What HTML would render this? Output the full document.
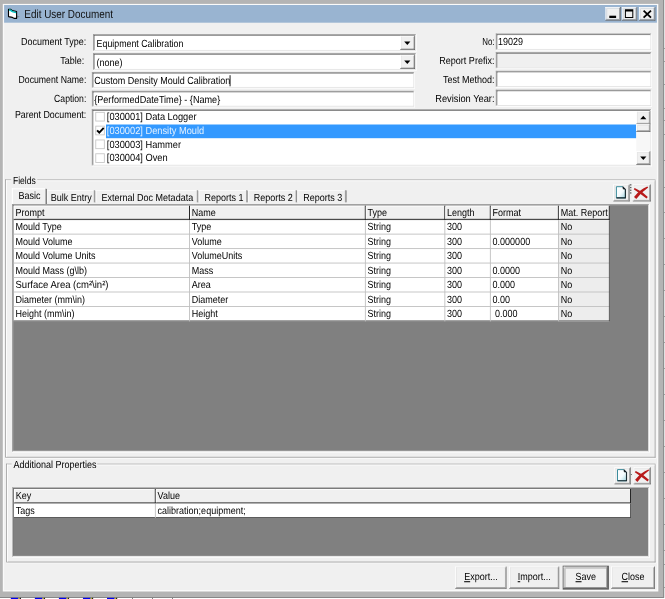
<!DOCTYPE html>
<html><head><meta charset="utf-8"><title>Edit User Document</title>
<style>
*{margin:0;padding:0}
html,body{width:665px;height:599px;overflow:hidden;background:#fff}
svg{will-change:transform;display:block;position:absolute;left:0;top:0}
text{font-family:"Liberation Sans",sans-serif;white-space:pre;text-rendering:geometricPrecision}
</style></head><body>
<svg width="665" height="599" viewBox="0 0 665 599">
<defs><linearGradient id="dg" x1="0" y1="0" x2="1" y2="1"><stop offset="0" stop-color="#fff"/><stop offset=".55" stop-color="#f4fbfd"/><stop offset="1" stop-color="#9fd3de"/></linearGradient></defs>
<rect x="0" y="0" width="665" height="599" fill="#fff"/>
<rect x="0" y="0" width="664.2" height="597.8" fill="#6a6a6a"/>
<rect x="0" y="0" width="663.5" height="597" fill="#b4b4b4"/>
<rect x="2.8" y="3.9" width="655.5" height="587.6" fill="#fafafa"/>
<rect x="4.1" y="5" width="652.8" height="585" fill="#f0f0f0"/>
<rect x="4.1" y="5" width="652.8" height="17.7" fill="#99b4d1"/>
<rect x="10.8" y="597.8" width="7.7" height="1.2" fill="#0000f0"/>
<rect x="18.5" y="597.8" width="1.2" height="1.2" fill="#c8c800"/>
<rect x="19.7" y="597.8" width="1.3" height="1.2" fill="#202020"/>
<rect x="34.85" y="597.8" width="7.7" height="1.2" fill="#0000f0"/>
<rect x="42.55" y="597.8" width="1.2" height="1.2" fill="#c8c800"/>
<rect x="43.75" y="597.8" width="1.3" height="1.2" fill="#202020"/>
<rect x="58.9" y="597.8" width="7.7" height="1.2" fill="#0000f0"/>
<rect x="66.6" y="597.8" width="1.2" height="1.2" fill="#c8c800"/>
<rect x="67.8" y="597.8" width="1.3" height="1.2" fill="#202020"/>
<rect x="82.95" y="597.8" width="7.7" height="1.2" fill="#0000f0"/>
<rect x="90.65" y="597.8" width="1.2" height="1.2" fill="#c8c800"/>
<rect x="91.85" y="597.8" width="1.3" height="1.2" fill="#202020"/>
<rect x="107" y="597.8" width="7.7" height="1.2" fill="#0000f0"/>
<rect x="114.7" y="597.8" width="1.2" height="1.2" fill="#c8c800"/>
<rect x="115.9" y="597.8" width="1.3" height="1.2" fill="#202020"/>
<rect x="132" y="597.8" width="1" height="1.2" fill="#808080"/>
<rect x="152" y="597.8" width="1" height="1.2" fill="#808080"/>
<rect x="172" y="597.8" width="1" height="1.2" fill="#808080"/>
<rect x="664.2" y="48" width="0.8" height="1" fill="#909090"/>
<rect x="664.2" y="61" width="0.8" height="1" fill="#909090"/>
<rect x="664.2" y="84" width="0.8" height="1" fill="#909090"/>
<rect x="664.2" y="108" width="0.8" height="1" fill="#909090"/>
<rect x="664.2" y="120" width="0.8" height="1" fill="#909090"/>
<rect x="664.2" y="134" width="0.8" height="1" fill="#909090"/>
<rect x="664.2" y="160" width="0.8" height="1" fill="#909090"/>
<rect x="664.2" y="187" width="0.8" height="1" fill="#909090"/>
<rect x="664.2" y="212" width="0.8" height="1" fill="#909090"/>
<rect x="664.2" y="238" width="0.8" height="1" fill="#909090"/>
<rect x="664.2" y="264" width="0.8" height="1" fill="#909090"/>
<rect x="664.2" y="290" width="0.8" height="1" fill="#909090"/>
<rect x="664.2" y="316" width="0.8" height="1" fill="#909090"/>
<rect x="664.2" y="342" width="0.8" height="1" fill="#909090"/>
<rect x="664.2" y="368" width="0.8" height="1" fill="#909090"/>
<rect x="664.2" y="394" width="0.8" height="1" fill="#909090"/>
<rect x="664.2" y="420" width="0.8" height="1" fill="#909090"/>
<rect x="664.2" y="446" width="0.8" height="1" fill="#909090"/>
<rect x="664.2" y="472" width="0.8" height="1" fill="#909090"/>
<rect x="664.2" y="498" width="0.8" height="1" fill="#909090"/>
<rect x="664.2" y="524" width="0.8" height="1" fill="#909090"/>
<rect x="664.2" y="550" width="0.8" height="1" fill="#909090"/>
<rect x="664.2" y="564" width="0.8" height="1" fill="#909090"/>
<rect x="664.2" y="587" width="0.8" height="1" fill="#909090"/>
<polygon points="17,15.6 19.8,16.7 17,17.8" fill="#7f8c9a"/>
<polygon points="8.5,9.3 10.6,9.3 12.4,10.6 16.6,11.5 16.6,18.4 14.4,18.4 12.4,17.4 8.5,16.6" fill="#fff" stroke="#000" stroke-width="1.1" stroke-linejoin="round"/>
<polyline points="9.1,10.1 10.6,10.3 12.4,11.6 16.1,12.6" fill="none" stroke="#00c4c4" stroke-width="1.5"/>
<text transform="translate(24.3 18.1) scale(0.86 1)" font-size="11.7" text-anchor="start" fill="#101010" textLength="103.14" lengthAdjust="spacingAndGlyphs">Edit User Document</text>
<rect x="605.4" y="19.75" width="15.3" height="0.85" fill="#696969"/>
<rect x="619.85" y="7" width="0.85" height="13.6" fill="#696969"/>
<rect x="605.4" y="7" width="14.45" height="0.85" fill="#ffffff"/>
<rect x="605.4" y="7" width="0.85" height="12.75" fill="#ffffff"/>
<rect x="606.25" y="18.9" width="13.6" height="0.85" fill="#a0a0a0"/>
<rect x="619" y="7.85" width="0.85" height="11.9" fill="#a0a0a0"/>
<rect x="606.25" y="7.85" width="12.75" height="0.85" fill="#e6e6e6"/>
<rect x="606.25" y="7.85" width="0.85" height="11.05" fill="#e6e6e6"/>
<rect x="607.1" y="8.7" width="11.9" height="10.2" fill="#f0f0f0"/>
<rect x="621.9" y="19.75" width="15.3" height="0.85" fill="#696969"/>
<rect x="636.35" y="7" width="0.85" height="13.6" fill="#696969"/>
<rect x="621.9" y="7" width="14.45" height="0.85" fill="#ffffff"/>
<rect x="621.9" y="7" width="0.85" height="12.75" fill="#ffffff"/>
<rect x="622.75" y="18.9" width="13.6" height="0.85" fill="#a0a0a0"/>
<rect x="635.5" y="7.85" width="0.85" height="11.9" fill="#a0a0a0"/>
<rect x="622.75" y="7.85" width="12.75" height="0.85" fill="#e6e6e6"/>
<rect x="622.75" y="7.85" width="0.85" height="11.05" fill="#e6e6e6"/>
<rect x="623.6" y="8.7" width="11.9" height="10.2" fill="#f0f0f0"/>
<rect x="639.1" y="19.75" width="16.2" height="0.85" fill="#696969"/>
<rect x="654.45" y="7" width="0.85" height="13.6" fill="#696969"/>
<rect x="639.1" y="7" width="15.35" height="0.85" fill="#ffffff"/>
<rect x="639.1" y="7" width="0.85" height="12.75" fill="#ffffff"/>
<rect x="639.95" y="18.9" width="14.5" height="0.85" fill="#a0a0a0"/>
<rect x="653.6" y="7.85" width="0.85" height="11.9" fill="#a0a0a0"/>
<rect x="639.95" y="7.85" width="13.65" height="0.85" fill="#e6e6e6"/>
<rect x="639.95" y="7.85" width="0.85" height="11.05" fill="#e6e6e6"/>
<rect x="640.8" y="8.7" width="12.8" height="10.2" fill="#f0f0f0"/>
<rect x="609.3" y="15.7" width="6.8" height="2.3" fill="#000"/>
<path d="M624.9 9.3 H633.3 V17.9 H624.9 Z M625.9 11.4 V16.9 H632.3 V11.4 Z" fill="#000" fill-rule="evenodd"/>
<path d="M643.6 10.6 L651 17.6 M651 10.6 L643.6 17.6" stroke="#000" stroke-width="1.8" fill="none"/>
<text transform="translate(86.3 44.8) scale(0.874 1)" font-size="10.3" text-anchor="end" fill="#000" textLength="74.6" lengthAdjust="spacingAndGlyphs">Document Type:</text>
<text transform="translate(84.3 64) scale(0.874 1)" font-size="10.3" text-anchor="end" fill="#000">Table:</text>
<text transform="translate(86.3 83.1) scale(0.874 1)" font-size="10.3" text-anchor="end" fill="#000" textLength="77.57" lengthAdjust="spacingAndGlyphs">Document Name:</text>
<text transform="translate(86.3 101.9) scale(0.874 1)" font-size="10.3" text-anchor="end" fill="#000" textLength="36.84" lengthAdjust="spacingAndGlyphs">Caption:</text>
<text transform="translate(86.3 117.9) scale(0.874 1)" font-size="10.3" text-anchor="end" fill="#000" textLength="81.69" lengthAdjust="spacingAndGlyphs">Parent Document:</text>
<rect x="93" y="50.75" width="323.6" height="0.85" fill="#ffffff"/>
<rect x="415.75" y="34.1" width="0.85" height="17.5" fill="#ffffff"/>
<rect x="93" y="34.1" width="322.75" height="0.85" fill="#a0a0a0"/>
<rect x="93" y="34.1" width="0.85" height="16.65" fill="#a0a0a0"/>
<rect x="93.85" y="49.9" width="321.9" height="0.85" fill="#e3e3e3"/>
<rect x="414.9" y="34.95" width="0.85" height="15.8" fill="#e3e3e3"/>
<rect x="93.85" y="34.95" width="321.05" height="0.85" fill="#696969"/>
<rect x="93.85" y="34.95" width="0.85" height="14.95" fill="#696969"/>
<rect x="94.7" y="35.8" width="320.2" height="14.1" fill="#fff"/>
<rect x="400.2" y="49.15" width="14.8" height="0.85" fill="#696969"/>
<rect x="414.15" y="35.9" width="0.85" height="14.1" fill="#696969"/>
<rect x="400.2" y="35.9" width="13.95" height="0.85" fill="#ffffff"/>
<rect x="400.2" y="35.9" width="0.85" height="13.25" fill="#ffffff"/>
<rect x="401.05" y="48.3" width="13.1" height="0.85" fill="#a0a0a0"/>
<rect x="413.3" y="36.75" width="0.85" height="12.4" fill="#a0a0a0"/>
<rect x="401.05" y="36.75" width="12.25" height="0.85" fill="#e6e6e6"/>
<rect x="401.05" y="36.75" width="0.85" height="11.55" fill="#e6e6e6"/>
<rect x="401.9" y="37.6" width="11.4" height="10.7" fill="#f0f0f0"/>
<polygon points="404.2,41.6 410.4,41.6 407.3,45.1" fill="#000"/>
<text transform="translate(96.6 46.6) scale(0.874 1)" font-size="10.3" text-anchor="start" fill="#000" textLength="99.31" lengthAdjust="spacingAndGlyphs">Equipment Calibration</text>
<rect x="93" y="69.75" width="323.6" height="0.85" fill="#ffffff"/>
<rect x="415.75" y="53.1" width="0.85" height="17.5" fill="#ffffff"/>
<rect x="93" y="53.1" width="322.75" height="0.85" fill="#a0a0a0"/>
<rect x="93" y="53.1" width="0.85" height="16.65" fill="#a0a0a0"/>
<rect x="93.85" y="68.9" width="321.9" height="0.85" fill="#e3e3e3"/>
<rect x="414.9" y="53.95" width="0.85" height="15.8" fill="#e3e3e3"/>
<rect x="93.85" y="53.95" width="321.05" height="0.85" fill="#696969"/>
<rect x="93.85" y="53.95" width="0.85" height="14.95" fill="#696969"/>
<rect x="94.7" y="54.8" width="320.2" height="14.1" fill="#fff"/>
<rect x="400.2" y="68.15" width="14.8" height="0.85" fill="#696969"/>
<rect x="414.15" y="54.9" width="0.85" height="14.1" fill="#696969"/>
<rect x="400.2" y="54.9" width="13.95" height="0.85" fill="#ffffff"/>
<rect x="400.2" y="54.9" width="0.85" height="13.25" fill="#ffffff"/>
<rect x="401.05" y="67.3" width="13.1" height="0.85" fill="#a0a0a0"/>
<rect x="413.3" y="55.75" width="0.85" height="12.4" fill="#a0a0a0"/>
<rect x="401.05" y="55.75" width="12.25" height="0.85" fill="#e6e6e6"/>
<rect x="401.05" y="55.75" width="0.85" height="11.55" fill="#e6e6e6"/>
<rect x="401.9" y="56.6" width="11.4" height="10.7" fill="#f0f0f0"/>
<polygon points="404.2,60.6 410.4,60.6 407.3,64.1" fill="#000"/>
<text transform="translate(96.6 65.6) scale(0.874 1)" font-size="10.3" text-anchor="start" fill="#000">(none)</text>
<rect x="91.9" y="87.75" width="323.1" height="0.85" fill="#ffffff"/>
<rect x="414.15" y="72" width="0.85" height="16.6" fill="#ffffff"/>
<rect x="91.9" y="72" width="322.25" height="0.85" fill="#a0a0a0"/>
<rect x="91.9" y="72" width="0.85" height="15.75" fill="#a0a0a0"/>
<rect x="92.75" y="86.9" width="321.4" height="0.85" fill="#e3e3e3"/>
<rect x="413.3" y="72.85" width="0.85" height="14.9" fill="#e3e3e3"/>
<rect x="92.75" y="72.85" width="320.55" height="0.85" fill="#696969"/>
<rect x="92.75" y="72.85" width="0.85" height="14.05" fill="#696969"/>
<rect x="93.6" y="73.7" width="319.7" height="13.2" fill="#fff"/>
<text transform="translate(94.2 83.8) scale(0.874 1)" font-size="10.3" text-anchor="start" fill="#000">Custom Density Mould Calibration</text>
<rect x="229.6" y="75.2" width="0.9" height="11.1" fill="#000"/>
<rect x="91.9" y="106.55" width="323.1" height="0.85" fill="#ffffff"/>
<rect x="414.15" y="90.8" width="0.85" height="16.6" fill="#ffffff"/>
<rect x="91.9" y="90.8" width="322.25" height="0.85" fill="#a0a0a0"/>
<rect x="91.9" y="90.8" width="0.85" height="15.75" fill="#a0a0a0"/>
<rect x="92.75" y="105.7" width="321.4" height="0.85" fill="#e3e3e3"/>
<rect x="413.3" y="91.65" width="0.85" height="14.9" fill="#e3e3e3"/>
<rect x="92.75" y="91.65" width="320.55" height="0.85" fill="#696969"/>
<rect x="92.75" y="91.65" width="0.85" height="14.05" fill="#696969"/>
<rect x="93.6" y="92.5" width="319.7" height="13.2" fill="#fff"/>
<text transform="translate(94.2 102.7) scale(0.874 1)" font-size="10.3" text-anchor="start" fill="#000" textLength="144.16" lengthAdjust="spacingAndGlyphs">{PerformedDateTime} - {Name}</text>
<text transform="translate(494.5 44.8) scale(0.874 1)" font-size="10.3" text-anchor="end" fill="#000" textLength="14.07" lengthAdjust="spacingAndGlyphs">No:</text>
<text transform="translate(494.5 63.9) scale(0.874 1)" font-size="10.3" text-anchor="end" fill="#000" textLength="63.27" lengthAdjust="spacingAndGlyphs">Report Prefix:</text>
<text transform="translate(494.5 82.8) scale(0.874 1)" font-size="10.3" text-anchor="end" fill="#000">Test Method:</text>
<text transform="translate(494.5 101.6) scale(0.874 1)" font-size="10.3" text-anchor="end" fill="#000" textLength="67.85" lengthAdjust="spacingAndGlyphs">Revision Year:</text>
<rect x="495.8" y="49.75" width="156.2" height="0.85" fill="#ffffff"/>
<rect x="651.15" y="33.5" width="0.85" height="17.1" fill="#ffffff"/>
<rect x="495.8" y="33.5" width="155.35" height="0.85" fill="#a0a0a0"/>
<rect x="495.8" y="33.5" width="0.85" height="16.25" fill="#a0a0a0"/>
<rect x="496.65" y="48.9" width="154.5" height="0.85" fill="#e3e3e3"/>
<rect x="650.3" y="34.35" width="0.85" height="15.4" fill="#e3e3e3"/>
<rect x="496.65" y="34.35" width="153.65" height="0.85" fill="#696969"/>
<rect x="496.65" y="34.35" width="0.85" height="14.55" fill="#696969"/>
<rect x="497.5" y="35.2" width="152.8" height="13.7" fill="#fff"/>
<text transform="translate(498 45.4) scale(0.874 1)" font-size="10.3" text-anchor="start" fill="#000">19029</text>
<rect x="495.8" y="68.25" width="156.2" height="0.85" fill="#ffffff"/>
<rect x="651.15" y="52.1" width="0.85" height="17" fill="#ffffff"/>
<rect x="495.8" y="52.1" width="155.35" height="0.85" fill="#a0a0a0"/>
<rect x="495.8" y="52.1" width="0.85" height="16.15" fill="#a0a0a0"/>
<rect x="496.65" y="67.4" width="154.5" height="0.85" fill="#e3e3e3"/>
<rect x="650.3" y="52.95" width="0.85" height="15.3" fill="#e3e3e3"/>
<rect x="496.65" y="52.95" width="153.65" height="0.85" fill="#696969"/>
<rect x="496.65" y="52.95" width="0.85" height="14.45" fill="#696969"/>
<rect x="497.5" y="53.8" width="152.8" height="13.6" fill="#f0f0f0"/>
<rect x="495.8" y="86.95" width="156.2" height="0.85" fill="#ffffff"/>
<rect x="651.15" y="70.8" width="0.85" height="17" fill="#ffffff"/>
<rect x="495.8" y="70.8" width="155.35" height="0.85" fill="#a0a0a0"/>
<rect x="495.8" y="70.8" width="0.85" height="16.15" fill="#a0a0a0"/>
<rect x="496.65" y="86.1" width="154.5" height="0.85" fill="#e3e3e3"/>
<rect x="650.3" y="71.65" width="0.85" height="15.3" fill="#e3e3e3"/>
<rect x="496.65" y="71.65" width="153.65" height="0.85" fill="#696969"/>
<rect x="496.65" y="71.65" width="0.85" height="14.45" fill="#696969"/>
<rect x="497.5" y="72.5" width="152.8" height="13.6" fill="#fff"/>
<rect x="495.8" y="105.85" width="156.2" height="0.85" fill="#ffffff"/>
<rect x="651.15" y="89.7" width="0.85" height="17" fill="#ffffff"/>
<rect x="495.8" y="89.7" width="155.35" height="0.85" fill="#a0a0a0"/>
<rect x="495.8" y="89.7" width="0.85" height="16.15" fill="#a0a0a0"/>
<rect x="496.65" y="105" width="154.5" height="0.85" fill="#e3e3e3"/>
<rect x="650.3" y="90.55" width="0.85" height="15.3" fill="#e3e3e3"/>
<rect x="496.65" y="90.55" width="153.65" height="0.85" fill="#696969"/>
<rect x="496.65" y="90.55" width="0.85" height="14.45" fill="#696969"/>
<rect x="497.5" y="91.4" width="152.8" height="13.6" fill="#fff"/>
<rect x="91.8" y="165.55" width="560" height="0.85" fill="#ffffff"/>
<rect x="650.95" y="109.2" width="0.85" height="57.2" fill="#ffffff"/>
<rect x="91.8" y="109.2" width="559.15" height="0.85" fill="#a0a0a0"/>
<rect x="91.8" y="109.2" width="0.85" height="56.35" fill="#a0a0a0"/>
<rect x="92.65" y="164.7" width="558.3" height="0.85" fill="#e3e3e3"/>
<rect x="650.1" y="110.05" width="0.85" height="55.5" fill="#e3e3e3"/>
<rect x="92.65" y="110.05" width="557.45" height="0.85" fill="#696969"/>
<rect x="92.65" y="110.05" width="0.85" height="54.65" fill="#696969"/>
<rect x="93.5" y="110.9" width="556.6" height="53.8" fill="#fff"/>
<rect x="95.3" y="111.9" width="9.5" height="9.6" fill="#c8c8c8"/>
<rect x="96.2" y="112.8" width="7.7" height="7.8" fill="#fff"/>
<text transform="translate(106.8 119.9) scale(0.90022 1)" font-size="10.3" text-anchor="start" fill="#000">[030001] Data Logger</text>
<rect x="106" y="124.5" width="530.3" height="13.7" fill="#3399ff"/>
<rect x="95.3" y="125.7" width="9.5" height="9.6" fill="#c8c8c8"/>
<rect x="96.2" y="126.6" width="7.7" height="7.8" fill="#fff"/>
<path d="M97.1 130.3 L99.3 132.7 L103.7 127.9" stroke="#000" stroke-width="1.9" fill="none"/>
<text transform="translate(106.8 133.7) scale(0.90022 1)" font-size="10.3" text-anchor="start" fill="#e4f1ff">[030002] Density Mould</text>
<rect x="95.3" y="139.5" width="9.5" height="9.6" fill="#c8c8c8"/>
<rect x="96.2" y="140.4" width="7.7" height="7.8" fill="#fff"/>
<text transform="translate(106.8 147.5) scale(0.90022 1)" font-size="10.3" text-anchor="start" fill="#000">[030003] Hammer</text>
<rect x="95.3" y="153.3" width="9.5" height="9.6" fill="#c8c8c8"/>
<rect x="96.2" y="154.2" width="7.7" height="7.8" fill="#fff"/>
<text transform="translate(106.8 161.3) scale(0.90022 1)" font-size="10.3" text-anchor="start" fill="#000">[030004] Oven</text>
<rect x="636.3" y="111" width="14" height="53.8" fill="#f7f7f7"/>
<rect x="636.3" y="123.45" width="14" height="0.85" fill="#696969"/>
<rect x="649.45" y="111" width="0.85" height="13.3" fill="#696969"/>
<rect x="636.3" y="111" width="13.15" height="0.85" fill="#ffffff"/>
<rect x="636.3" y="111" width="0.85" height="12.45" fill="#ffffff"/>
<rect x="637.15" y="122.6" width="12.3" height="0.85" fill="#a0a0a0"/>
<rect x="648.6" y="111.85" width="0.85" height="11.6" fill="#a0a0a0"/>
<rect x="637.15" y="111.85" width="11.45" height="0.85" fill="#e6e6e6"/>
<rect x="637.15" y="111.85" width="0.85" height="10.75" fill="#e6e6e6"/>
<rect x="638" y="112.7" width="10.6" height="9.9" fill="#f0f0f0"/>
<rect x="636.3" y="130.95" width="14" height="0.85" fill="#696969"/>
<rect x="649.45" y="124.3" width="0.85" height="7.5" fill="#696969"/>
<rect x="636.3" y="124.3" width="13.15" height="0.85" fill="#ffffff"/>
<rect x="636.3" y="124.3" width="0.85" height="6.65" fill="#ffffff"/>
<rect x="637.15" y="130.1" width="12.3" height="0.85" fill="#a0a0a0"/>
<rect x="648.6" y="125.15" width="0.85" height="5.8" fill="#a0a0a0"/>
<rect x="637.15" y="125.15" width="11.45" height="0.85" fill="#e6e6e6"/>
<rect x="637.15" y="125.15" width="0.85" height="4.95" fill="#e6e6e6"/>
<rect x="638" y="126" width="10.6" height="4.1" fill="#f0f0f0"/>
<rect x="636.3" y="163.95" width="14" height="0.85" fill="#696969"/>
<rect x="649.45" y="151.2" width="0.85" height="13.6" fill="#696969"/>
<rect x="636.3" y="151.2" width="13.15" height="0.85" fill="#ffffff"/>
<rect x="636.3" y="151.2" width="0.85" height="12.75" fill="#ffffff"/>
<rect x="637.15" y="163.1" width="12.3" height="0.85" fill="#a0a0a0"/>
<rect x="648.6" y="152.05" width="0.85" height="11.9" fill="#a0a0a0"/>
<rect x="637.15" y="152.05" width="11.45" height="0.85" fill="#e6e6e6"/>
<rect x="637.15" y="152.05" width="0.85" height="11.05" fill="#e6e6e6"/>
<rect x="638" y="152.9" width="10.6" height="10.2" fill="#f0f0f0"/>
<polygon points="640.2,119.3 646.4,119.3 643.3,115.8" fill="#000"/>
<polygon points="640.2,156.6 646.4,156.6 643.3,160.1" fill="#000"/>
<rect x="5.1" y="457.65" width="651.3" height="0.85" fill="#ffffff"/>
<rect x="655.55" y="179.5" width="0.85" height="279" fill="#ffffff"/>
<rect x="5.1" y="179.5" width="650.45" height="0.85" fill="#a0a0a0"/>
<rect x="5.1" y="179.5" width="0.85" height="278.15" fill="#a0a0a0"/>
<rect x="5.95" y="456.8" width="649.6" height="0.85" fill="#a0a0a0"/>
<rect x="654.7" y="180.35" width="0.85" height="277.3" fill="#a0a0a0"/>
<rect x="5.95" y="180.35" width="648.75" height="0.85" fill="#ffffff"/>
<rect x="5.95" y="180.35" width="0.85" height="276.45" fill="#ffffff"/>
<rect x="11.2" y="178.5" width="26.1" height="4" fill="#f0f0f0"/>
<text transform="translate(13 183.5) scale(0.874 1)" font-size="10.3" text-anchor="start" fill="#000" textLength="26.09" lengthAdjust="spacingAndGlyphs">Fields</text>
<rect x="11.8" y="188.3" width="35.2" height="16.7" fill="#f0f0f0"/>
<rect x="11.8" y="188.3" width="34.4" height="1.1" fill="#fff"/>
<rect x="11.8" y="188.3" width="1.1" height="15.9" fill="#fff"/>
<rect x="45.3" y="188.6" width="0.9" height="15.4" fill="#a0a0a0"/>
<rect x="46.2" y="188.9" width="0.8" height="15.1" fill="#696969"/>
<text transform="translate(18.4 198.7) scale(0.874 1)" font-size="10.3" text-anchor="start" fill="#000">Basic</text>
<rect x="47.2" y="190" width="46.6" height="0.9" fill="#fbfbfb"/>
<rect x="47.2" y="190" width="1" height="12.3" fill="#fbfbfb"/>
<rect x="93.8" y="190.2" width="0.8" height="12.1" fill="#a0a0a0"/>
<rect x="94.6" y="190.4" width="0.8" height="11.9" fill="#696969"/>
<text transform="translate(50.8 200.7) scale(0.874 1)" font-size="10.3" text-anchor="start" fill="#000">Bulk Entry</text>
<rect x="95.5" y="190" width="101.3" height="0.9" fill="#fbfbfb"/>
<rect x="95.5" y="190" width="1" height="12.3" fill="#fbfbfb"/>
<rect x="196.8" y="190.2" width="0.8" height="12.1" fill="#a0a0a0"/>
<rect x="197.6" y="190.4" width="0.8" height="11.9" fill="#696969"/>
<text transform="translate(101.6 200.7) scale(0.874 1)" font-size="10.3" text-anchor="start" fill="#000">External Doc Metadata</text>
<rect x="198.5" y="190" width="47.6" height="0.9" fill="#fbfbfb"/>
<rect x="198.5" y="190" width="1" height="12.3" fill="#fbfbfb"/>
<rect x="246.1" y="190.2" width="0.8" height="12.1" fill="#a0a0a0"/>
<rect x="246.9" y="190.4" width="0.8" height="11.9" fill="#696969"/>
<text transform="translate(204.4 200.7) scale(0.874 1)" font-size="10.3" text-anchor="start" fill="#000">Reports 1</text>
<rect x="247.8" y="190" width="47.8" height="0.9" fill="#fbfbfb"/>
<rect x="247.8" y="190" width="1" height="12.3" fill="#fbfbfb"/>
<rect x="295.6" y="190.2" width="0.8" height="12.1" fill="#a0a0a0"/>
<rect x="296.4" y="190.4" width="0.8" height="11.9" fill="#696969"/>
<text transform="translate(253.8 200.7) scale(0.874 1)" font-size="10.3" text-anchor="start" fill="#000">Reports 2</text>
<rect x="297.3" y="190" width="47.6" height="0.9" fill="#fbfbfb"/>
<rect x="297.3" y="190" width="1" height="12.3" fill="#fbfbfb"/>
<rect x="344.9" y="190.2" width="0.8" height="12.1" fill="#a0a0a0"/>
<rect x="345.7" y="190.4" width="0.8" height="11.9" fill="#696969"/>
<text transform="translate(303.3 200.7) scale(0.874 1)" font-size="10.3" text-anchor="start" fill="#000">Reports 3</text>
<rect x="613.3" y="200.55" width="16.3" height="0.85" fill="#696969"/>
<rect x="628.75" y="184.5" width="0.85" height="16.9" fill="#696969"/>
<rect x="613.3" y="184.5" width="15.45" height="0.85" fill="#ffffff"/>
<rect x="613.3" y="184.5" width="0.85" height="16.05" fill="#ffffff"/>
<rect x="614.15" y="199.7" width="14.6" height="0.85" fill="#a0a0a0"/>
<rect x="627.9" y="185.35" width="0.85" height="15.2" fill="#a0a0a0"/>
<rect x="614.15" y="185.35" width="13.75" height="0.85" fill="#e6e6e6"/>
<rect x="614.15" y="185.35" width="0.85" height="14.35" fill="#e6e6e6"/>
<rect x="615" y="186.2" width="12.9" height="13.5" fill="#f0f0f0"/>
<rect x="632.8" y="200.55" width="17.9" height="0.85" fill="#696969"/>
<rect x="649.85" y="184.5" width="0.85" height="16.9" fill="#696969"/>
<rect x="632.8" y="184.5" width="17.05" height="0.85" fill="#ffffff"/>
<rect x="632.8" y="184.5" width="0.85" height="16.05" fill="#ffffff"/>
<rect x="633.65" y="199.7" width="16.2" height="0.85" fill="#a0a0a0"/>
<rect x="649" y="185.35" width="0.85" height="15.2" fill="#a0a0a0"/>
<rect x="633.65" y="185.35" width="15.35" height="0.85" fill="#e6e6e6"/>
<rect x="633.65" y="185.35" width="0.85" height="14.35" fill="#e6e6e6"/>
<rect x="634.5" y="186.2" width="14.5" height="13.5" fill="#f0f0f0"/>
<rect x="630.3" y="184.2" width="1" height="1.3" fill="#222"/>
<rect x="630.3" y="186.9" width="1" height="1.3" fill="#222"/>
<rect x="630.3" y="189.6" width="1" height="1.3" fill="#222"/>
<rect x="630.3" y="192.3" width="1" height="1.3" fill="#222"/>
<g transform="translate(614.8 185.5)"><path d="M1.6 1.2 L7.8 1.2 L10.6 4 L10.6 12.4 L1.6 12.4 Z" fill="url(#dg)" stroke="#3b8c9c" stroke-width="1"/><path d="M7.8 1.2 L10.6 4 L10.6 12.4 L1.6 12.4" fill="none" stroke="#1c2a30" stroke-width="1.1"/><path d="M8.3 1.9 L8.3 3.6 L10 3.6 Z" fill="#10181c" stroke="#10181c" stroke-width=".5"/></g>
<g transform="translate(633 185.5)"><path d="M14.3 1.0 Q7.0 3.8 1.0 11.4 L3.3 13.5 Q8.1 6.8 15.2 1.9 Z" fill="#b81a1a"/><path d="M1.7 2.5 Q8.8 5.4 14.8 11.4 L13.5 13.1 Q7.5 8.4 0.7 3.8 Z" fill="#b81a1a"/></g>
<rect x="12" y="451.65" width="637.8" height="0.85" fill="#ffffff"/>
<rect x="648.95" y="204" width="0.85" height="248.5" fill="#ffffff"/>
<rect x="12" y="204" width="636.95" height="0.85" fill="#a0a0a0"/>
<rect x="12" y="204" width="0.85" height="247.65" fill="#a0a0a0"/>
<rect x="12.85" y="450.8" width="636.1" height="0.85" fill="#e3e3e3"/>
<rect x="648.1" y="204.85" width="0.85" height="246.8" fill="#e3e3e3"/>
<rect x="12.85" y="204.85" width="635.25" height="0.85" fill="#696969"/>
<rect x="12.85" y="204.85" width="0.85" height="245.95" fill="#696969"/>
<rect x="13.7" y="205.7" width="634.4" height="245.1" fill="#808080"/>
<rect x="13.7" y="205.7" width="596.1" height="14.4" fill="#f0f0f0"/>
<rect x="13.7" y="205.7" width="596.1" height="0.8" fill="#fff"/>
<rect x="13.7" y="218.8" width="596.1" height="1.3" fill="#4a4a4a"/>
<rect x="189" y="205.7" width="1" height="14.4" fill="#262626"/>
<rect x="13.7" y="206.5" width="0.8" height="12.3" fill="#fff"/>
<text transform="translate(15.5 215.9) scale(0.874 1)" font-size="10.3" text-anchor="start" fill="#000">Prompt</text>
<rect x="364.8" y="205.7" width="1" height="14.4" fill="#262626"/>
<rect x="190" y="206.5" width="0.8" height="12.3" fill="#fff"/>
<text transform="translate(191.8 215.9) scale(0.874 1)" font-size="10.3" text-anchor="start" fill="#000">Name</text>
<rect x="444.3" y="205.7" width="1" height="14.4" fill="#262626"/>
<rect x="365.8" y="206.5" width="0.8" height="12.3" fill="#fff"/>
<text transform="translate(367.6 215.9) scale(0.874 1)" font-size="10.3" text-anchor="start" fill="#000">Type</text>
<rect x="489.8" y="205.7" width="1" height="14.4" fill="#262626"/>
<rect x="445.3" y="206.5" width="0.8" height="12.3" fill="#fff"/>
<text transform="translate(447.1 215.9) scale(0.874 1)" font-size="10.3" text-anchor="start" fill="#000">Length</text>
<rect x="557.9" y="205.7" width="1" height="14.4" fill="#262626"/>
<rect x="490.8" y="206.5" width="0.8" height="12.3" fill="#fff"/>
<text transform="translate(492.6 215.9) scale(0.874 1)" font-size="10.3" text-anchor="start" fill="#000">Format</text>
<rect x="608.8" y="205.7" width="1" height="14.4" fill="#262626"/>
<rect x="558.9" y="206.5" width="0.8" height="12.3" fill="#fff"/>
<text transform="translate(560.7 215.9) scale(0.874 1)" font-size="10.3" text-anchor="start" fill="#000">Mat. Report</text>
<rect x="13.7" y="220.1" width="596.1" height="101.29" fill="#fff"/>
<rect x="558.9" y="220.1" width="50.9" height="101.29" fill="#ededed"/>
<rect x="13.7" y="233.67" width="596.1" height="0.9" fill="#c0c0c0"/>
<rect x="13.7" y="248.14" width="596.1" height="0.9" fill="#c0c0c0"/>
<rect x="13.7" y="262.61" width="596.1" height="0.9" fill="#c0c0c0"/>
<rect x="13.7" y="277.08" width="596.1" height="0.9" fill="#c0c0c0"/>
<rect x="13.7" y="291.55" width="596.1" height="0.9" fill="#c0c0c0"/>
<rect x="13.7" y="306.02" width="596.1" height="0.9" fill="#c0c0c0"/>
<rect x="13.7" y="320.49" width="596.1" height="0.9" fill="#4a4a4a"/>
<rect x="189.1" y="220.1" width="0.9" height="101.29" fill="#c0c0c0"/>
<rect x="364.9" y="220.1" width="0.9" height="101.29" fill="#c0c0c0"/>
<rect x="444.4" y="220.1" width="0.9" height="101.29" fill="#c0c0c0"/>
<rect x="489.9" y="220.1" width="0.9" height="101.29" fill="#c0c0c0"/>
<rect x="558" y="220.1" width="0.9" height="101.29" fill="#c0c0c0"/>
<rect x="608.9" y="220.1" width="0.9" height="101.29" fill="#4a4a4a"/>
<text transform="translate(15.5 230.47) scale(0.874 1)" font-size="10.3" text-anchor="start" fill="#000">Mould Type</text>
<text transform="translate(191.8 230.47) scale(0.874 1)" font-size="10.3" text-anchor="start" fill="#000">Type</text>
<text transform="translate(367.6 230.47) scale(0.874 1)" font-size="10.3" text-anchor="start" fill="#000">String</text>
<text transform="translate(447.1 230.47) scale(0.874 1)" font-size="10.3" text-anchor="start" fill="#000">300</text>
<text transform="translate(560.7 230.47) scale(0.874 1)" font-size="10.3" text-anchor="start" fill="#000">No</text>
<text transform="translate(15.5 244.94) scale(0.874 1)" font-size="10.3" text-anchor="start" fill="#000">Mould Volume</text>
<text transform="translate(191.8 244.94) scale(0.874 1)" font-size="10.3" text-anchor="start" fill="#000">Volume</text>
<text transform="translate(367.6 244.94) scale(0.874 1)" font-size="10.3" text-anchor="start" fill="#000">String</text>
<text transform="translate(447.1 244.94) scale(0.874 1)" font-size="10.3" text-anchor="start" fill="#000">300</text>
<text transform="translate(492.6 244.94) scale(0.874 1)" font-size="10.3" text-anchor="start" fill="#000">0.000000</text>
<text transform="translate(560.7 244.94) scale(0.874 1)" font-size="10.3" text-anchor="start" fill="#000">No</text>
<text transform="translate(15.5 259.41) scale(0.874 1)" font-size="10.3" text-anchor="start" fill="#000">Mould Volume Units</text>
<text transform="translate(191.8 259.41) scale(0.874 1)" font-size="10.3" text-anchor="start" fill="#000">VolumeUnits</text>
<text transform="translate(367.6 259.41) scale(0.874 1)" font-size="10.3" text-anchor="start" fill="#000">String</text>
<text transform="translate(447.1 259.41) scale(0.874 1)" font-size="10.3" text-anchor="start" fill="#000">300</text>
<text transform="translate(560.7 259.41) scale(0.874 1)" font-size="10.3" text-anchor="start" fill="#000">No</text>
<text transform="translate(15.5 273.88) scale(0.874 1)" font-size="10.3" text-anchor="start" fill="#000">Mould Mass (g\lb)</text>
<text transform="translate(191.8 273.88) scale(0.874 1)" font-size="10.3" text-anchor="start" fill="#000">Mass</text>
<text transform="translate(367.6 273.88) scale(0.874 1)" font-size="10.3" text-anchor="start" fill="#000">String</text>
<text transform="translate(447.1 273.88) scale(0.874 1)" font-size="10.3" text-anchor="start" fill="#000">300</text>
<text transform="translate(492.6 273.88) scale(0.874 1)" font-size="10.3" text-anchor="start" fill="#000">0.0000</text>
<text transform="translate(560.7 273.88) scale(0.874 1)" font-size="10.3" text-anchor="start" fill="#000">No</text>
<text transform="translate(15.5 288.35) scale(0.874 1)" font-size="10.3" text-anchor="start" fill="#000" textLength="106.41" lengthAdjust="spacingAndGlyphs">Surface Area (cm²\in²)</text>
<text transform="translate(191.8 288.35) scale(0.874 1)" font-size="10.3" text-anchor="start" fill="#000">Area</text>
<text transform="translate(367.6 288.35) scale(0.874 1)" font-size="10.3" text-anchor="start" fill="#000">String</text>
<text transform="translate(447.1 288.35) scale(0.874 1)" font-size="10.3" text-anchor="start" fill="#000">300</text>
<text transform="translate(492.6 288.35) scale(0.874 1)" font-size="10.3" text-anchor="start" fill="#000">0.000</text>
<text transform="translate(560.7 288.35) scale(0.874 1)" font-size="10.3" text-anchor="start" fill="#000">No</text>
<text transform="translate(15.5 302.82) scale(0.874 1)" font-size="10.3" text-anchor="start" fill="#000">Diameter (mm\in)</text>
<text transform="translate(191.8 302.82) scale(0.874 1)" font-size="10.3" text-anchor="start" fill="#000">Diameter</text>
<text transform="translate(367.6 302.82) scale(0.874 1)" font-size="10.3" text-anchor="start" fill="#000">String</text>
<text transform="translate(447.1 302.82) scale(0.874 1)" font-size="10.3" text-anchor="start" fill="#000">300</text>
<text transform="translate(492.6 302.82) scale(0.874 1)" font-size="10.3" text-anchor="start" fill="#000">0.00</text>
<text transform="translate(560.7 302.82) scale(0.874 1)" font-size="10.3" text-anchor="start" fill="#000">No</text>
<text transform="translate(15.5 317.29) scale(0.874 1)" font-size="10.3" text-anchor="start" fill="#000">Height (mm\in)</text>
<text transform="translate(191.8 317.29) scale(0.874 1)" font-size="10.3" text-anchor="start" fill="#000">Height</text>
<text transform="translate(367.6 317.29) scale(0.874 1)" font-size="10.3" text-anchor="start" fill="#000">String</text>
<text transform="translate(447.1 317.29) scale(0.874 1)" font-size="10.3" text-anchor="start" fill="#000">300</text>
<text transform="translate(492.6 317.29) scale(0.874 1)" font-size="10.3" text-anchor="start" fill="#000"> 0.000</text>
<text transform="translate(560.7 317.29) scale(0.874 1)" font-size="10.3" text-anchor="start" fill="#000">No</text>
<rect x="6.2" y="562.45" width="650.2" height="0.85" fill="#ffffff"/>
<rect x="655.55" y="463.7" width="0.85" height="99.6" fill="#ffffff"/>
<rect x="6.2" y="463.7" width="649.35" height="0.85" fill="#a0a0a0"/>
<rect x="6.2" y="463.7" width="0.85" height="98.75" fill="#a0a0a0"/>
<rect x="7.05" y="561.6" width="648.5" height="0.85" fill="#a0a0a0"/>
<rect x="654.7" y="464.55" width="0.85" height="97.9" fill="#a0a0a0"/>
<rect x="7.05" y="464.55" width="647.65" height="0.85" fill="#ffffff"/>
<rect x="7.05" y="464.55" width="0.85" height="97.05" fill="#ffffff"/>
<rect x="11.6" y="462.7" width="85.5" height="4" fill="#f0f0f0"/>
<text transform="translate(13.4 468.2) scale(0.874 1)" font-size="10.3" text-anchor="start" fill="#000">Additional Properties</text>
<rect x="614.4" y="483.45" width="16.3" height="0.85" fill="#696969"/>
<rect x="629.85" y="467.4" width="0.85" height="16.9" fill="#696969"/>
<rect x="614.4" y="467.4" width="15.45" height="0.85" fill="#ffffff"/>
<rect x="614.4" y="467.4" width="0.85" height="16.05" fill="#ffffff"/>
<rect x="615.25" y="482.6" width="14.6" height="0.85" fill="#a0a0a0"/>
<rect x="629" y="468.25" width="0.85" height="15.2" fill="#a0a0a0"/>
<rect x="615.25" y="468.25" width="13.75" height="0.85" fill="#e6e6e6"/>
<rect x="615.25" y="468.25" width="0.85" height="14.35" fill="#e6e6e6"/>
<rect x="616.1" y="469.1" width="12.9" height="13.5" fill="#f0f0f0"/>
<rect x="633.68" y="483.45" width="17.02" height="0.85" fill="#696969"/>
<rect x="649.85" y="467.4" width="0.85" height="16.9" fill="#696969"/>
<rect x="633.68" y="467.4" width="16.17" height="0.85" fill="#ffffff"/>
<rect x="633.68" y="467.4" width="0.85" height="16.05" fill="#ffffff"/>
<rect x="634.53" y="482.6" width="15.32" height="0.85" fill="#a0a0a0"/>
<rect x="649" y="468.25" width="0.85" height="15.2" fill="#a0a0a0"/>
<rect x="634.53" y="468.25" width="14.47" height="0.85" fill="#e6e6e6"/>
<rect x="634.53" y="468.25" width="0.85" height="14.35" fill="#e6e6e6"/>
<rect x="635.38" y="469.1" width="13.62" height="13.5" fill="#f0f0f0"/>
<rect x="630.9" y="474" width="0.8" height="1" fill="#444"/>
<g transform="translate(615.9 468.4)"><path d="M1.6 1.2 L7.8 1.2 L10.6 4 L10.6 12.4 L1.6 12.4 Z" fill="url(#dg)" stroke="#3b8c9c" stroke-width="1"/><path d="M7.8 1.2 L10.6 4 L10.6 12.4 L1.6 12.4" fill="none" stroke="#1c2a30" stroke-width="1.1"/><path d="M8.3 1.9 L8.3 3.6 L10 3.6 Z" fill="#10181c" stroke="#10181c" stroke-width=".5"/></g>
<g transform="translate(634.1 468.4)"><path d="M14.3 1.0 Q7.0 3.8 1.0 11.4 L3.3 13.5 Q8.1 6.8 15.2 1.9 Z" fill="#b81a1a"/><path d="M1.7 2.5 Q8.8 5.4 14.8 11.4 L13.5 13.1 Q7.5 8.4 0.7 3.8 Z" fill="#b81a1a"/></g>
<rect x="12.3" y="556.75" width="637.5" height="0.85" fill="#ffffff"/>
<rect x="648.95" y="487.3" width="0.85" height="70.3" fill="#ffffff"/>
<rect x="12.3" y="487.3" width="636.65" height="0.85" fill="#a0a0a0"/>
<rect x="12.3" y="487.3" width="0.85" height="69.45" fill="#a0a0a0"/>
<rect x="13.15" y="555.9" width="635.8" height="0.85" fill="#e3e3e3"/>
<rect x="648.1" y="488.15" width="0.85" height="68.6" fill="#e3e3e3"/>
<rect x="13.15" y="488.15" width="634.95" height="0.85" fill="#696969"/>
<rect x="13.15" y="488.15" width="0.85" height="67.75" fill="#696969"/>
<rect x="14" y="489" width="634.1" height="66.9" fill="#808080"/>
<rect x="14" y="489" width="617" height="14.6" fill="#f0f0f0"/>
<rect x="14" y="489" width="617" height="0.8" fill="#fff"/>
<rect x="14" y="502.3" width="617" height="1.3" fill="#4a4a4a"/>
<rect x="154.8" y="489" width="1" height="14.6" fill="#262626"/>
<rect x="14" y="489.8" width="0.8" height="12.5" fill="#fff"/>
<text transform="translate(15.8 499.4) scale(0.874 1)" font-size="10.3" text-anchor="start" fill="#000">Key</text>
<rect x="630" y="489" width="1" height="14.6" fill="#262626"/>
<rect x="155.8" y="489.8" width="0.8" height="12.5" fill="#fff"/>
<text transform="translate(157.6 499.4) scale(0.874 1)" font-size="10.3" text-anchor="start" fill="#000">Value</text>
<rect x="14" y="503.6" width="617" height="14.4" fill="#fff"/>
<rect x="14" y="517.1" width="617" height="0.9" fill="#4a4a4a"/>
<rect x="154.9" y="503.6" width="0.9" height="14.4" fill="#c0c0c0"/>
<rect x="630.1" y="503.6" width="0.9" height="14.4" fill="#4a4a4a"/>
<text transform="translate(15.8 513.9) scale(0.874 1)" font-size="10.3" text-anchor="start" fill="#000">Tags</text>
<text transform="translate(157.6 513.9) scale(0.874 1)" font-size="10.3" text-anchor="start" fill="#000">calibration;equipment;</text>
<rect x="455.3" y="587.85" width="51.2" height="0.85" fill="#696969"/>
<rect x="505.65" y="566.6" width="0.85" height="22.1" fill="#696969"/>
<rect x="455.3" y="566.6" width="50.35" height="0.85" fill="#ffffff"/>
<rect x="455.3" y="566.6" width="0.85" height="21.25" fill="#ffffff"/>
<rect x="456.15" y="587" width="49.5" height="0.85" fill="#a0a0a0"/>
<rect x="504.8" y="567.45" width="0.85" height="20.4" fill="#a0a0a0"/>
<rect x="456.15" y="567.45" width="48.65" height="0.85" fill="#e6e6e6"/>
<rect x="456.15" y="567.45" width="0.85" height="19.55" fill="#e6e6e6"/>
<rect x="457" y="568.3" width="47.8" height="18.7" fill="#f0f0f0"/>
<text transform="translate(480.9 580.2) scale(0.874 1)" font-size="10.3" text-anchor="middle" fill="#000"><tspan text-decoration="underline">E</tspan>xport...</text>
<rect x="509.2" y="587.85" width="50" height="0.85" fill="#696969"/>
<rect x="558.35" y="566.6" width="0.85" height="22.1" fill="#696969"/>
<rect x="509.2" y="566.6" width="49.15" height="0.85" fill="#ffffff"/>
<rect x="509.2" y="566.6" width="0.85" height="21.25" fill="#ffffff"/>
<rect x="510.05" y="587" width="48.3" height="0.85" fill="#a0a0a0"/>
<rect x="557.5" y="567.45" width="0.85" height="20.4" fill="#a0a0a0"/>
<rect x="510.05" y="567.45" width="47.45" height="0.85" fill="#e6e6e6"/>
<rect x="510.05" y="567.45" width="0.85" height="19.55" fill="#e6e6e6"/>
<rect x="510.9" y="568.3" width="46.6" height="18.7" fill="#f0f0f0"/>
<text transform="translate(534.2 580.2) scale(0.874 1)" font-size="10.3" text-anchor="middle" fill="#000"><tspan text-decoration="underline">I</tspan>mport...</text>
<rect x="562.7" y="565.7" width="46.2" height="23.9" fill="#5a5a5a"/>
<rect x="563.6" y="587.85" width="44.4" height="0.85" fill="#696969"/>
<rect x="607.15" y="566.6" width="0.85" height="22.1" fill="#696969"/>
<rect x="563.6" y="566.6" width="43.55" height="0.85" fill="#ffffff"/>
<rect x="563.6" y="566.6" width="0.85" height="21.25" fill="#ffffff"/>
<rect x="564.45" y="587" width="42.7" height="0.85" fill="#a0a0a0"/>
<rect x="606.3" y="567.45" width="0.85" height="20.4" fill="#a0a0a0"/>
<rect x="564.45" y="567.45" width="41.85" height="0.85" fill="#e6e6e6"/>
<rect x="564.45" y="567.45" width="0.85" height="19.55" fill="#e6e6e6"/>
<rect x="565.3" y="568.3" width="41" height="18.7" fill="#f0f0f0"/>
<text transform="translate(585.8 580.2) scale(0.874 1)" font-size="10.3" text-anchor="middle" fill="#000"><tspan text-decoration="underline">S</tspan>ave</text>
<rect x="611.2" y="587.85" width="43.7" height="0.85" fill="#696969"/>
<rect x="654.05" y="566.6" width="0.85" height="22.1" fill="#696969"/>
<rect x="611.2" y="566.6" width="42.85" height="0.85" fill="#ffffff"/>
<rect x="611.2" y="566.6" width="0.85" height="21.25" fill="#ffffff"/>
<rect x="612.05" y="587" width="42" height="0.85" fill="#a0a0a0"/>
<rect x="653.2" y="567.45" width="0.85" height="20.4" fill="#a0a0a0"/>
<rect x="612.05" y="567.45" width="41.15" height="0.85" fill="#e6e6e6"/>
<rect x="612.05" y="567.45" width="0.85" height="19.55" fill="#e6e6e6"/>
<rect x="612.9" y="568.3" width="40.3" height="18.7" fill="#f0f0f0"/>
<text transform="translate(633.05 580.2) scale(0.874 1)" font-size="10.3" text-anchor="middle" fill="#000"><tspan text-decoration="underline">C</tspan>lose</text>
</svg>
</body></html>
